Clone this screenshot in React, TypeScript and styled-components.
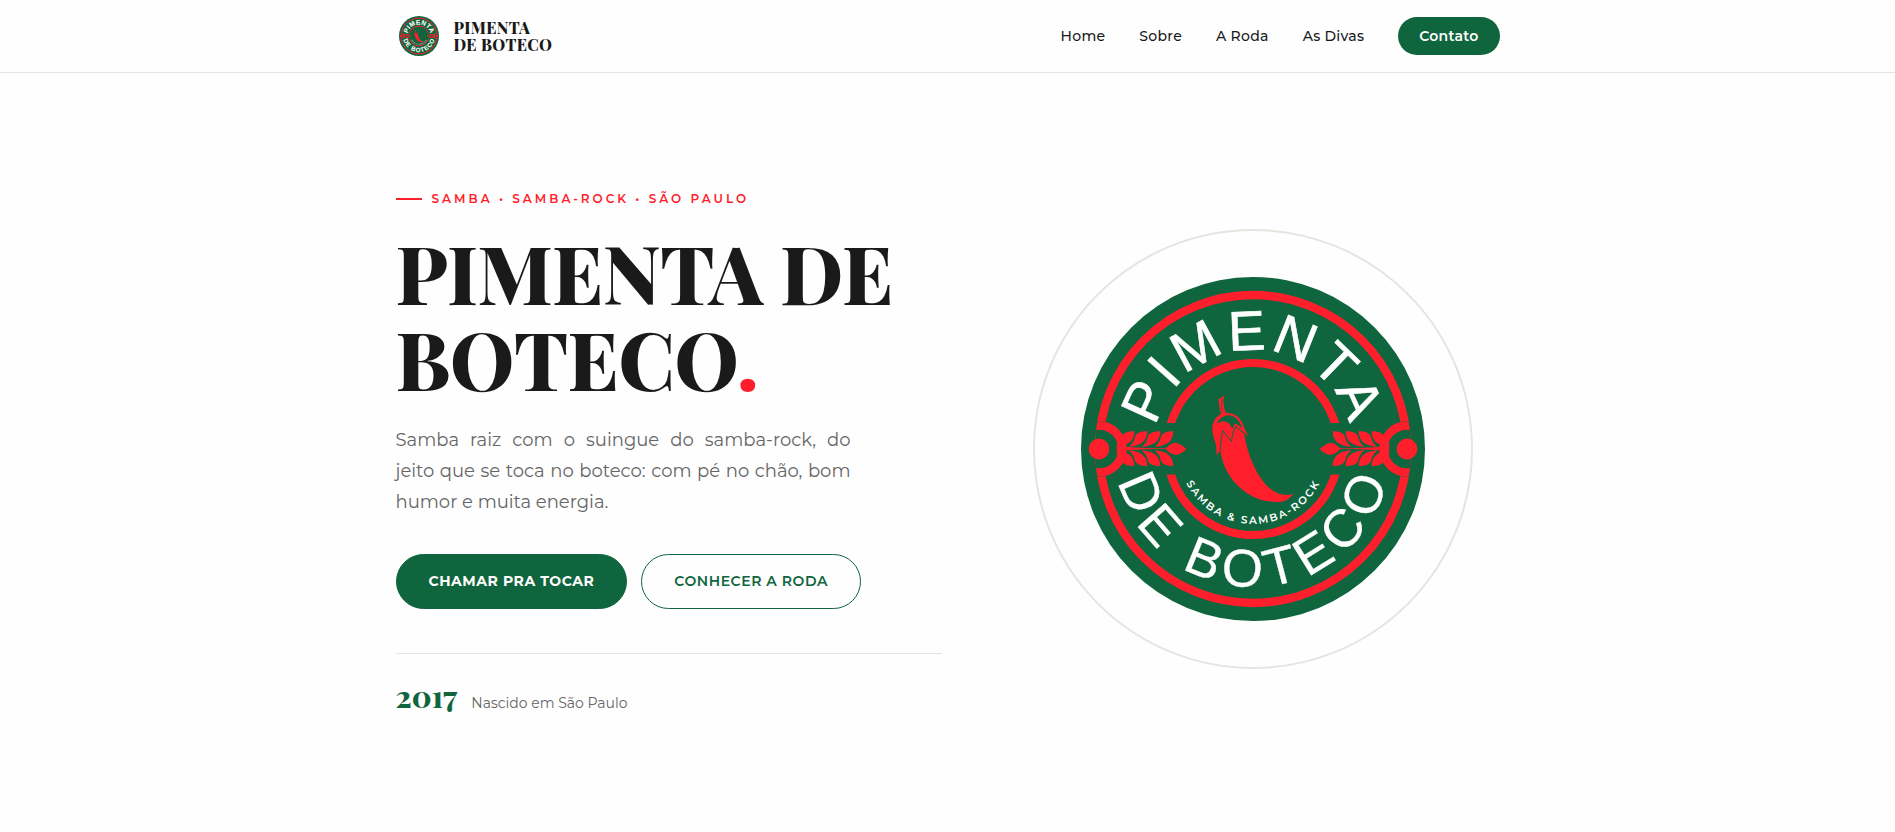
import React, { useId } from 'react';
import styled, { createGlobalStyle } from 'styled-components';

const green = '#0f653d';
const red = '#ff1f2c';
const ink = '#1a1a1a';
const muted = '#666666';
const line = '#e5e5e0';
const sans = "Montserrat, Inter, 'Noto Sans', sans-serif";
const serif = "'Playfair Display', 'Liberation Serif', serif";

const GlobalStyle = createGlobalStyle`
  *, *::before, *::after { box-sizing: border-box; }
  body {
    margin: 0;
    background: #fefefe;
    color: ${ink};
    font-family: ${sans};
  }
`;

const Header = styled.header`
  border-bottom: 1px solid ${line};
`;

const Container = styled.div`
  max-width: 1200px;
  margin: 0 auto;
  padding: 0 48px;
`;

const HeaderBar = styled(Container)`
  height: 72px;
  display: flex;
  align-items: center;
  justify-content: space-between;
`;

const Brand = styled.a`
  display: flex;
  align-items: center;
  gap: 12px;
  color: ${ink};
  text-decoration: none;
  font: 800 16px/17px ${serif};
  letter-spacing: 0.02em;
`;

const BrandMark = styled.span`
  display: flex;
  width: 46px;
  padding: 3px;
`;

const BrandName = styled.span`
  white-space: nowrap;
`;

const Nav = styled.nav`
  display: flex;
  align-items: center;
  gap: 34px;
`;

const NavLink = styled.a`
  color: ${ink};
  font-size: 14px;
  font-weight: 500;
  line-height: 18px;
  letter-spacing: 0.02em;
  text-decoration: none;
`;

const NavButton = styled(NavLink)`
  padding: 10px 21px;
  border-radius: 100px;
  background: ${green};
  color: #fff;
  font-weight: 600;
`;

const Hero = styled(Container).attrs({ as: 'main' })`
  padding-top: 112px;
  padding-bottom: 112px;
  display: grid;
  grid-template-columns: 21fr 19fr;
  gap: 64px;
  align-items: center;
`;

const Eyebrow = styled.p`
  display: flex;
  align-items: center;
  gap: 10px;
  margin: 0 0 16px;
  color: ${red};
  font-size: 12px;
  font-weight: 600;
  line-height: 28px;
  letter-spacing: 3px;
  text-transform: uppercase;

  &::before {
    content: '';
    width: 26px;
    height: 2px;
    background: ${red};
  }
`;

const Title = styled.h1`
  margin: 0 0 24px;
  font: 800 80px/86px ${serif};
  letter-spacing: -0.01em;
`;

const Dot = styled.span`
  color: ${red};
`;

const Lead = styled.p`
  max-width: 455px;
  margin: 0 0 36px;
  color: ${muted};
  font-size: 18px;
  font-weight: 400;
  line-height: 31px;
  text-align: justify;
`;

const Actions = styled.div`
  display: flex;
  gap: 14px;
`;

const Action = styled.a<{ $outline?: boolean }>`
  padding: 18px 32px;
  border: 1px solid ${green};
  border-radius: 100px;
  background: ${(p) => (p.$outline ? 'transparent' : green)};
  color: ${(p) => (p.$outline ? green : '#fff')};
  font-size: 14px;
  font-weight: ${(p) => (p.$outline ? 600 : 700)};
  line-height: 17px;
  letter-spacing: 0.04em;
  text-decoration: none;
  text-transform: uppercase;
`;

const Facts = styled.div`
  display: flex;
  align-items: baseline;
  gap: 14px;
  margin-top: 44px;
  padding-top: 27px;
  border-top: 1px solid ${line};
`;

const Year = styled.strong`
  color: ${green};
  font: 800 30px/30px ${serif};
`;

const FactLabel = styled.span`
  color: ${muted};
  font-size: 14px;
  line-height: 20px;
`;

const Ring = styled.div`
  justify-self: center;
  width: 100%;
  max-width: 440px;
  aspect-ratio: 1;
  padding: 46px;
  border: 2px solid ${line};
  border-radius: 50%;
`;

const Emblem = styled.svg`
  display: block;
  width: 100%;
  height: auto;
`;

const leafOffsets = [0, -39, -78, -117];

function Wheat() {
  return (
    <g transform="translate(-168 -34) scale(.33333)" fill={red}>
      <path d="M243 101C250 89 262 84 273 83C287 87 296 94 304 102C297 110 287 116 274 120C261 117 249 112 243 101Z" />
      {leafOffsets.map((dx) => (
        <g key={dx} transform={`translate(${dx} 0)`}>
          <path d="M209 96C217 88 225 80 227 68C229 57 240 49 265 49C264 74 252 92 209 96Z" />
          <path d="M209 106C217 114 225 122 227 134C229 145 240 153 265 153C264 128 252 110 209 106Z" />
        </g>
      ))}
      <path d="M96 78L125 96L205 100L243 100V102L205 102L125 106L96 124Z" />
    </g>
  );
}

function SideOrnament({ clip }: { clip: string }) {
  return (
    <g>
      <g clipPath={`url(#${clip})`}>
        <circle cx="-154" r="28" fill={green} />
        <circle cx="-154" r="23.5" fill="none" stroke={red} strokeWidth="8.4" />
      </g>
      <circle cx="-154" r="10.4" fill={red} />
      <Wheat />
    </g>
  );
}

function Logo() {
  const id = useId().replace(/[^a-zA-Z0-9]/g, '');
  const clip = `${id}clip`;
  const cut = `${id}cut`;
  return (
    <Emblem viewBox="-172 -172 344 344" role="img" aria-label="Pimenta de Boteco">
      <defs>
        <clipPath id={clip}>
          <circle r="158" />
        </clipPath>
        <clipPath id={cut}>
          <path d="M-100-100H100V-26H-100ZM-100 25.500H100V100H-100Z" />
        </clipPath>
        <path id={`${id}top`} d="M-99 0A99 99 0 0 1 99 0" />
        <path id={`${id}bottom`} d="M-138 0A138 138 0 0 0 138 0" />
        <path id={`${id}small`} d="M-75 0A75 75 0 0 0 75 0" />
      </defs>
      <circle r="172" fill={green} />
      <circle r="154" fill="none" stroke={red} strokeWidth="8.4" />
      <circle r="86" fill="none" stroke={red} strokeWidth="8.2" clipPath={`url(#${cut})`} />
      <SideOrnament clip={clip} />
      <g transform="scale(-1 1)">
        <SideOrnament clip={clip} />
      </g>
      <g fill="#fff" textAnchor="middle" fontFamily="'Liberation Sans', Arial, sans-serif">
        <text fontSize="56" letterSpacing="3" stroke="#fff" strokeWidth=".6">
          <textPath href={`#${id}top`} startOffset="50%">PIMENTA</textPath>
        </text>
        <text fontSize="53" letterSpacing="7" stroke="#fff" strokeWidth=".3">
          <textPath href={`#${id}bottom`} startOffset="50.800%">DE BOTECO</textPath>
        </text>
        <text fontSize="10.500" fontWeight="600" letterSpacing="2" fontFamily={sans}>
          <textPath href={`#${id}small`} startOffset="50.200%">SAMBA &amp; SAMBA-ROCK</textPath>
        </text>
      </g>
      <g transform="translate(-48 -59) scale(.33333)">
        <path
          fill={red}
          d="M62 15C53 24 54 33 57 48C59 57 60 65 64 69C88 69 107 83 114 103C118 116 123 127 131 138L118 133C123 162 131 195 145 224C164 265 191 304 229 313C241 316 253 315 265 311C254 326 241 335 222 336C164 338 119 312 88 276C67 251 51 220 46 181C43 185 38 189 36 197C33 188 35 178 33 165C29 148 22 136 22 116C22 95 33 80 48 72C46 60 40 46 41 28Z"
        />
        <g fill="none" stroke={green} strokeWidth="3" strokeLinejoin="miter">
          <path d="M46 181C47 160 49 137 53 122L80 155C80 144 83 127 92 110L126 136" />
          <path d="M52 66C51 51 49 39 51 27" strokeWidth="2" />
        </g>
        <path
          fill={green}
          d="M35 101C44 84 57 76 71 76C91 77 104 92 112 114L91 100L81 117C78 106 72 98 65 97C56 91 46 93 35 101Z"
        />
      </g>
    </Emblem>
  );
}

const links = ['Home', 'Sobre', 'A Roda', 'As Divas'];

export default function App() {
  return (
    <>
      <GlobalStyle />
      <Header>
        <HeaderBar>
          <Brand href="#home">
            <BrandMark>
              <Logo />
            </BrandMark>
            <BrandName>
              PIMENTA
              <br />
              DE BOTECO
            </BrandName>
          </Brand>
          <Nav aria-label="Principal">
            {links.map((label) => (
              <NavLink key={label} href={`#${label.toLowerCase().replace(' ', '-')}`}>
                {label}
              </NavLink>
            ))}
            <NavButton href="#contato">Contato</NavButton>
          </Nav>
        </HeaderBar>
      </Header>
      <Hero id="home">
        <section>
          <Eyebrow>Samba • Samba-Rock • São Paulo</Eyebrow>
          <Title>
            PIMENTA DE BOTECO<Dot>.</Dot>
          </Title>
          <Lead>
            Samba raiz com o suingue do samba-rock, do jeito&nbsp;que se toca no boteco: com pé no
            chão, bom humor e muita energia.
          </Lead>
          <Actions>
            <Action href="#contato">Chamar pra tocar</Action>
            <Action href="#a-roda" $outline>
              Conhecer a Roda
            </Action>
          </Actions>
          <Facts>
            <Year>2017</Year>
            <FactLabel>Nascido em São Paulo</FactLabel>
          </Facts>
        </section>
        <Ring>
          <Logo />
        </Ring>
      </Hero>
    </>
  );
}
